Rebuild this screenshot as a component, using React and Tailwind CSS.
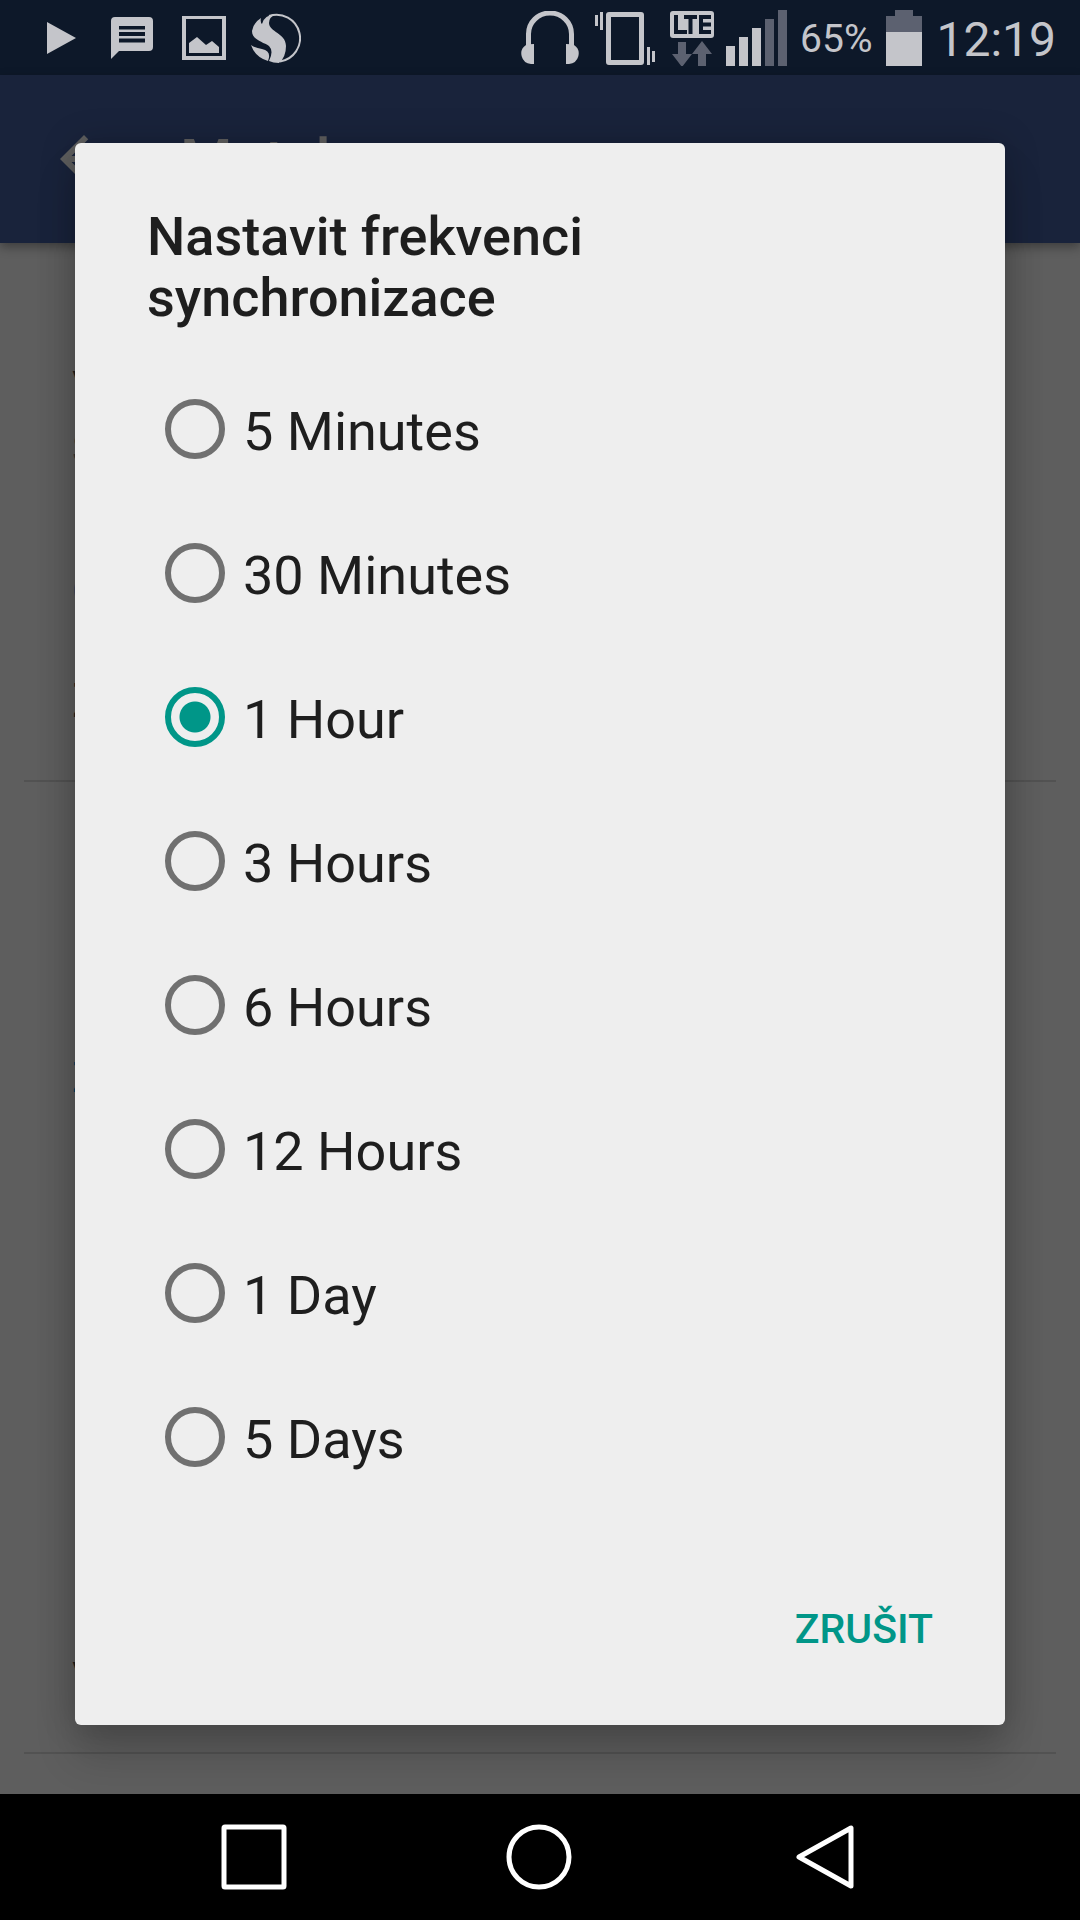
const options = ["5 Minutes", "30 Minutes", "1 Hour", "3 Hours", "6 Hours", "12 Hours", "1 Day", "5 Days"];

function StatusBar() {
  return (
    <header className="flex h-[75px] shrink-0 items-center justify-between bg-[#0d1829] text-[#c4c5ca]">
      <div className="flex items-center pl-[46px]">
        <svg className="h-9 w-8" viewBox="0 0 32 36" fill="currentColor"><path d="M1 2 30 18 1 34Z" /></svg>
        <svg className="ml-8 h-[44px] w-[44px]" viewBox="0 0 44 44" fill="currentColor">
          <path fillRule="evenodd" d="M5 1h34q4 0 4 4v26q0 4-4 4H9L1 43V5q0-4 4-4ZM9 10v3.500h26V10ZM9 16v4h26v-4ZM9 22.500v4h26v-4Z" />
        </svg>
        <svg className="ml-[28px] h-11 w-11" viewBox="0 0 44 44" fill="currentColor">
          <path fillRule="evenodd" d="M0 0h44v44H0ZM4 3v37h36V3Z" />
          <path d="M7 27l8-6 9 8 6-4 7 6v6H7Z" />
        </svg>
        <svg className="ml-[25px] h-[50px] w-[50px]" viewBox="0 0 50 50" fill="currentColor">
          <path d="M18 3A23.500 23.500 0 1 1 29 48.500" fill="none" stroke="currentColor" strokeWidth="2" />
          <path d="M25 1Q18 4 18 10C18 19 35 20 35 33Q35 44 28 50Q22 50 18 48Q23 38 18 33C12 29 1 27 1 18Q2 10 10 5Q9 9 11 11Q13 2 25 1Z" />
          <path d="M0 32Q4 35 11 36Q21 38 17 48Q4 44 0 32Z" />
        </svg>
      </div>
      <div className="flex items-center pr-6">
        <svg className="h-[54px] w-[60px]" viewBox="0 0 60 54" fill="currentColor">
          <path d="M8.500 35V23a21.500 21 0 0 1 43 0v12" fill="none" stroke="currentColor" strokeWidth="5" />
          <path d="M14 33v20h-3a11 10.500 0 0 1-5-19q2-1 8-1ZM46 33v20h3a11 10.500 0 0 0 5-19q-2-1-8-1Z" />
        </svg>
        <svg className="ml-[15px] h-[54px] w-[60px]" viewBox="0 0 60 54" fill="currentColor">
          <path d="M0 4h3v11H0ZM5 1h3v18H5ZM52 36h3v18h-3ZM57 40h3v11h-3Z" />
          <path fillRule="evenodd" d="M14 1h32q3 0 3 3v47q0 3-3 3H14q-3 0-3-3V4q0-3 3-3ZM16 6v43h28V6Z" />
        </svg>
        <svg className="ml-[15px] h-14 w-11" viewBox="0 0 44 56" fill="none">
          <rect y="1" width="44" height="27" rx="3" fill="#c4c5ca" />
          <path d="M6 5v17h11M14 7h13M20.500 7v17M41 7H31v15h10M31 14.500h10" stroke="#0d1829" strokeWidth="4" />
          <path d="M8 32h8v12h6L12 57 2 44h6ZM28 56V44h-6L32 31l10 13h-6v12Z" fill="#5c6170" />
        </svg>
        <svg className="ml-3 h-14 w-[61px]" viewBox="0 0 61 56" fill="#c4c5ca">
          <path d="M0 36h9v20H0ZM13 27h9v29h-9ZM26 18h9v38h-9Z" />
          <path d="M39 9h9v47h-9ZM52 0h9v56h-9Z" fill="#5c6170" />
        </svg>
        <span className="ml-[13px] pt-[4px] text-[39px] leading-none">65%</span>
        <svg className="ml-[14px] h-14 w-9" viewBox="0 0 36 56">
          <path d="M9 0h18v6h9v16H0V6h9Z" fill="#5c6170" />
          <path d="M0 22h36v34H0Z" fill="#c4c5ca" />
        </svg>
        <time className="ml-[14px] pt-[4px] text-[48px] leading-none">12:19</time>
      </div>
    </header>
  );
}

function SettingsPage() {
  return (
    <div className="flex grow flex-col bg-[#5e5e5e]">
      <div className="flex h-[168px] items-center bg-[#19233b] pl-12 text-[#5e5e5e] shadow-[0_4px_10px_rgba(0,0,0,0.35)]">
        <svg className="h-[72px] w-[72px]" viewBox="0 0 24 24" fill="currentColor">
          <path d="M20 11H7.830l5.590-5.590L12 4l-8 8 8 8 1.410-1.410L7.830 13H20v-2z" />
        </svg>
        <h1 className="ml-[60px] pt-1 text-[60px] font-medium">Match</h1>
      </div>
      <div className="mx-6 h-[539px] border-b-2 border-[#525252] px-12 pt-[116px] text-[48px] leading-[60px] text-[#1c1c1c]">
        <p>V</p>
        <p className="text-[42px] text-[#353535]">S</p>
        <p className="mt-[82px] text-[42px] text-[#00405c]">O</p>
        <p className="mt-[50px]">Z</p>
      </div>
      <div className="mx-6 flex h-[972px] flex-col justify-between border-b-2 border-[#525252] px-12 pt-[266px] pb-[42px] text-[48px] leading-[60px] text-[#1c1c1c]">
        <p className="text-[42px] text-[#00405c]">Z</p>
        <p>V</p>
      </div>
    </div>
  );
}

function FrequencyDialog() {
  return (
    <div role="dialog" aria-modal="true" aria-labelledby="dialog-title" className="absolute inset-x-[75px] top-[143px] rounded-md bg-[#eeeeee] px-[72px] pt-[63px] pb-[60px] text-[#1e1e1e] shadow-[0_32px_40px_rgba(0,0,0,0.16),0_0_36px_rgba(0,0,0,0.2)]">
      <h2 id="dialog-title" className="max-w-[600px] text-[54px] font-medium leading-[61px]">Nastavit frekvenci synchronizace</h2>
      <div role="radiogroup" aria-labelledby="dialog-title" className="mt-[29px]">
        {options.map((name) => (
          <label key={name} className="flex h-36 items-center pl-[18px]">
            <input
              type="radio"
              name="frequency"
              value={name}
              defaultChecked={name === "1 Hour"}
              className="h-[60px] w-[60px] shrink-0 appearance-none rounded-full border-[6px] border-[#707070] checked:border-[#009688] checked:bg-[radial-gradient(circle,#009688_15px,transparent_16px)]"
            />
            <span className="ml-[18px] pt-[6px] text-[54px] leading-[64px]">{name}</span>
          </label>
        ))}
      </div>
      <div className="mt-[86px] flex justify-end">
        <button type="button" className="h-[70px] text-[41px] font-medium text-[#009688]">ZRUŠIT</button>
      </div>
    </div>
  );
}

function NavigationBar() {
  return (
    <nav className="flex h-[126px] shrink-0 items-center justify-center gap-[219px] bg-black pr-[2px] text-white">
      <button type="button" aria-label="Recent apps">
        <svg className="h-[66px] w-[66px]" viewBox="0 0 66 66" fill="none" stroke="currentColor" strokeWidth="5"><rect x="3" y="3" width="60" height="60" rx="1" /></svg>
      </button>
      <button type="button" aria-label="Home">
        <svg className="h-[66px] w-[66px]" viewBox="0 0 66 66" fill="none" stroke="currentColor" strokeWidth="5"><circle cx="33" cy="33" r="30" /></svg>
      </button>
      <button type="button" aria-label="Back">
        <svg className="h-[66px] w-[66px]" viewBox="0 0 66 66" fill="none" stroke="currentColor" strokeWidth="5" strokeLinejoin="round"><path d="M60 4v58L8 33Z" /></svg>
      </button>
    </nav>
  );
}

export default function App() {
  return (
    <main className="relative flex min-h-screen flex-col overflow-hidden font-['Roboto',sans-serif]">
      <StatusBar />
      <SettingsPage />
      <FrequencyDialog />
      <NavigationBar />
    </main>
  );
}
